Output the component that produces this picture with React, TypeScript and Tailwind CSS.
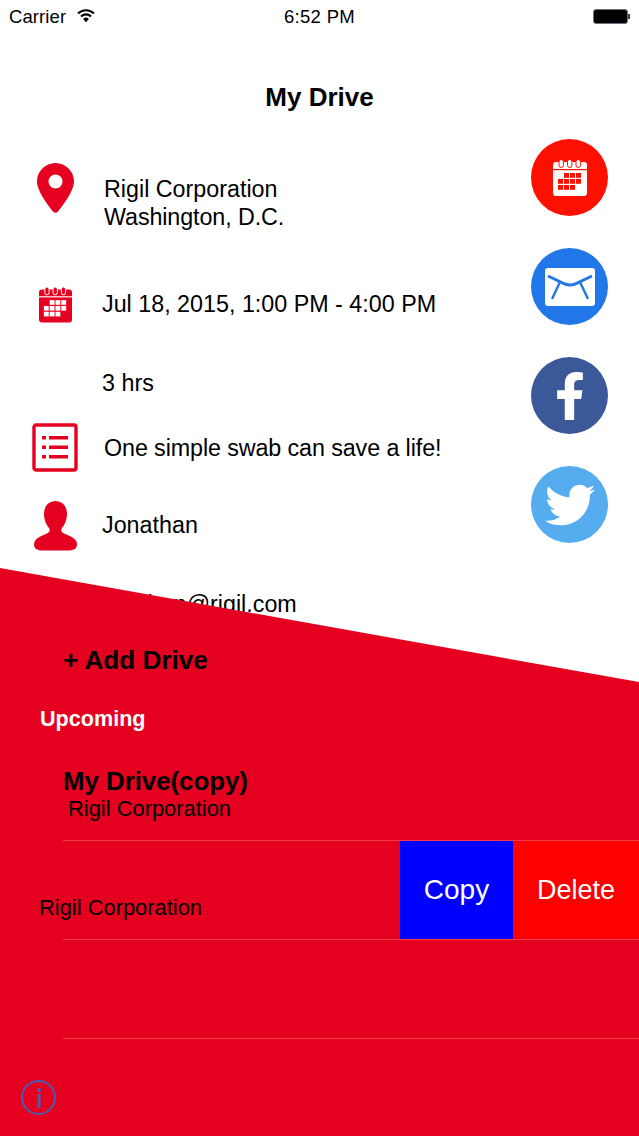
import React from 'react';
import { FaFacebookF, FaTwitter } from 'react-icons/fa';

const CalendarIcon = ({ fg, bg, className }: { fg: string; bg: string; className: string }) => (
  <svg className={className} viewBox="0 0 34 37">
    <path fill={fg} d="M3 3h28a3 3 0 0 1 3 3v28a3 3 0 0 1-3 3H3a3 3 0 0 1-3-3V6a3 3 0 0 1 3-3z" />
    <rect x="0" y="10" width="34" height="1.200" fill={bg} />
    {[6, 14.500, 23].map(x => (
      <rect key={x} x={x} y="0.500" width="4.400" height="8" rx="2.200" fill={fg} stroke={bg} strokeWidth="1" />
    ))}
    {[
      [11, 14],
      [17, 14],
      [23, 14],
      [5, 20],
      [11, 20],
      [17, 20],
      [23, 20],
      [5, 26],
      [11, 26],
      [17, 26],
    ].map(([x, y]) => (
      <rect key={`${x}-${y}`} x={x} y={y} width="5" height="4.800" fill={bg} />
    ))}
  </svg>
);

const Row = ({ icon, children, className }: { icon?: React.ReactNode; children: React.ReactNode; className: string }) => (
  <div className={`flex items-center text-[23.3px] leading-[27.5px] text-black ${className}`}>
    <div className="w-[104px] pl-[6px] flex justify-center shrink-0">{icon}</div>
    <div>{children}</div>
  </div>
);

const Round = ({ className, children }: { className: string; children: React.ReactNode }) => (
  <div className={`w-[77px] h-[77px] rounded-full flex items-center justify-center ${className}`}>{children}</div>
);

export default function App() {
  return (
    <div className="relative w-[639px] h-[1136px] overflow-hidden bg-white font-['Liberation_Sans',sans-serif]">
      {/* status bar */}
      <div className="h-[33px] flex items-center justify-between pl-[9px] pr-[9px] text-[18.500px] text-black">
        <div className="w-[200px] flex items-center gap-[11px]">
          <span className="tracking-[0.1px]">Carrier</span>
          <svg className="w-[18px] h-[15px] mb-[3px]" viewBox="0 0 17 14" fill="none" stroke="black">
            <path strokeWidth="2" d="M1 5.200a10.500 10.500 0 0 1 15 0" />
            <path strokeWidth="2" d="M3.800 8a6.500 6.500 0 0 1 9.400 0" />
            <path fill="black" stroke="none" d="M5.800 10.200a4 4 0 0 1 5.400 0L8.500 13.400z" />
          </svg>
        </div>
        <span className="font-medium tracking-[0.3px]">6:52 PM</span>
        <div className="w-[200px] flex justify-end items-center">
          <div className="w-[35px] h-[15px] rounded-[3px] bg-black border border-gray-500" />
          <div className="w-[2px] h-[5px] bg-gray-700" />
        </div>
      </div>

      <h1 className="mt-[47px] text-center text-[26px] leading-[34px] font-bold text-black">My Drive</h1>

      <div className="mt-[46px]">
        <Row
          className="pt-[3px] !items-start"
          icon={
            <svg className="w-[37px] h-[50px]" viewBox="0 0 37 50">
              <path fillRule="evenodd" fill="#e60020" d="M18.500 0C8.300 0 0 8.300 0 18.500 0 28 11 42 16 48.500a3.200 3.200 0 0 0 5 0C26 42 37 28 37 18.500 37 8.300 28.700 0 18.500 0zm0 11.500a7 7 0 1 1 0 14 7 7 0 0 1 0-14z" />
            </svg>
          }
        >
          <div className="pt-[13px]">Rigil Corporation</div>
          <div className="tracking-[-0.1px]">Washington, D.C.</div>
        </Row>
        <Row className="mt-[55px]" icon={<CalendarIcon fg="#e60020" bg="#ffffff" className="w-[33px] h-[37px]" />}>
          <div className="-ml-[2px]">Jul 18, 2015, 1:00 PM - 4:00 PM</div>
        </Row>
        <Row className="mt-[47px]">
          <div className="-ml-[2px]">3 hrs</div>
        </Row>
        <Row
          className="mt-[28px]"
          icon={
            <svg className="w-[46px] h-[49px] -mt-[3px]" viewBox="0 0 46 49">
              <rect x="2" y="2" width="42" height="45" rx="2" fill="none" stroke="#e60020" strokeWidth="3.400" />
              <g fill="#e60020">
                <rect x="10" y="13" width="4" height="3.500" />
                <rect x="17" y="13" width="19" height="3.500" />
                <rect x="10" y="22.500" width="4" height="3.500" />
                <rect x="17" y="22.500" width="19" height="3.500" />
                <rect x="10" y="32" width="4" height="3.500" />
                <rect x="17" y="32" width="19" height="3.500" />
              </g>
            </svg>
          }
        >
          <div className="tracking-[-0.1px]">One simple swab can save a life!</div>
        </Row>
        <Row
          className="mt-[29px]"
          icon={
            <svg className="w-[43px] h-[50px]" viewBox="0 0 43 50">
              <path fill="#e60020" d="M21.500 0C14.500 0 10 5.500 10 13c0 6 2.500 11 5 14 1.500 2 .5 4-2 5.500C7 35.500 0 37 0 43.500 0 48 4 49.500 9 49.500h25c5 0 9-1.500 9-6 0-6.500-7-8-13-11-2.500-1.500-3.500-3.500-2-5.500 2.500-3 5-8 5-14C33 5.500 28.500 0 21.500 0z" />
            </svg>
          }
        >
          <div className="-ml-[2px]">Jonathan</div>
        </Row>
        <Row className="mt-[40px]">
          <div className="-ml-[7px]">jonathan@rigil.com</div>
        </Row>
      </div>

      {/* share buttons float over the details */}
      <div className="absolute right-[31px] top-[139px] flex flex-col gap-[32px]">
        <Round className="bg-[#fe1000]">
          <CalendarIcon fg="#ffffff" bg="#fe1000" className="w-[34px] h-[37px]" />
        </Round>
        <Round className="bg-[#2277e8]">
          <svg className="w-[50px] h-[38px]" viewBox="0 0 50 38">
            <rect width="50" height="38" rx="3" fill="white" />
            <path d="M3 8 L20 16 Q25 18 30 16 L47 8" fill="none" stroke="#2277e8" strokeWidth="3" />
            <path d="M15 14 L7 31 M35 14 L43 31" fill="none" stroke="#2277e8" strokeWidth="2.400" />
          </svg>
        </Round>
        <Round className="bg-[#3b5998]">
          <FaFacebookF className="w-[30px] h-[52px] text-white" />
        </Round>
        <Round className="bg-[#55acee]">
          <FaTwitter className="w-[50px] h-[50px] text-white" />
        </Round>
      </div>

      {/* red sliding panel */}
      <div className="absolute inset-x-0 top-[568px] bottom-0 bg-[#e6001f] [clip-path:polygon(0_0,100%_114px,100%_100%,0_100%)]">
        <div className="pt-[75px] pl-[63px] text-[26.100px] leading-[34px] font-bold text-black">+ Add Drive</div>
        <div className="mt-[29px] pl-[40px] text-[21.600px] leading-[26px] font-bold text-white">Upcoming</div>
        <div className="mt-[34px] border-b border-[#f23a4a] ml-[63px] h-[75px] text-black">
          <div className="text-[25.800px] leading-[30px] font-bold">My Drive(copy)</div>
          <div className="ml-[5px] text-[21.900px] leading-[26px]">Rigil Corporation</div>
        </div>
        <div className="flex h-[99px] border-b border-[#f23a4a] ml-[63px]">
          <div className="flex-1 -ml-[24px] pt-[54px] text-[21.900px] leading-[26px] text-black">Rigil Corporation</div>
          <div className="w-[113px] bg-[#0000ff] flex items-center justify-center text-[28px] text-white">Copy</div>
          <div className="w-[126px] bg-[#ff0000] flex items-center justify-center text-[27px] text-white">Delete</div>
        </div>
        <div className="h-[99px] border-b border-[#f23a4a] ml-[63px]" />
        <div className="mt-[41px] ml-[21px] w-[35px] h-[35px] rounded-full border-2 border-[#4a5ab0] flex items-center justify-center">
          <svg className="w-[6px] h-[20px]" viewBox="0 0 6 20">
            <circle cx="3" cy="2" r="2" fill="#4a5ab0" />
            <rect x="1.500" y="6" width="3" height="14" fill="#4a5ab0" />
          </svg>
        </div>
      </div>
    </div>
  );
}
